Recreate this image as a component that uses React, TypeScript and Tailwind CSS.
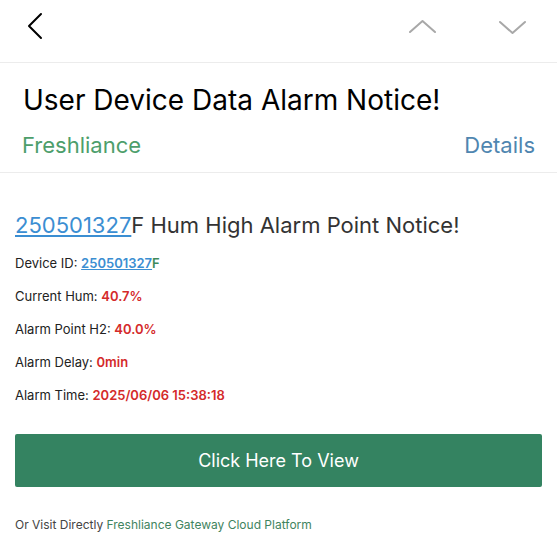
import React from 'react';

// ── Icons ─────────────────────────────────────────────────────────────────────

function Chevron({ d, box, className }: { d: string; box: string; className: string }) {
  return (
    <svg viewBox={box} fill="none" className={className}>
      <path d={d} stroke="currentColor" strokeWidth={2} strokeLinecap="round" strokeLinejoin="round" />
    </svg>
  );
}

// ── Detail rows ───────────────────────────────────────────────────────────────

const ROWS: { label: string; value: string }[] = [
  { label: 'Current Hum:', value: '40.7%' },
  { label: 'Alarm Point H2:', value: '40.0%' },
  { label: 'Alarm Delay:', value: '0min' },
  { label: 'Alarm Time:', value: '2025/06/06 15:38:18' },
];

export default function App() {
  return (
    <div className="w-[557px] h-[543px] bg-white overflow-hidden" style={{ fontFamily: 'Inter, "Noto Sans", sans-serif' }}>
      {/* Top bar */}
      <div className="h-[63px] flex items-center justify-between pl-[27px] pr-[31px] pb-[10px] border-b border-[#ececec]">
        <Chevron box="0 0 16 28" d="M14 2 L2 14 L14 26" className="w-[16px] h-[28px] text-black" />
        <div className="flex items-center gap-[63px]">
          <Chevron box="0 0 27 15" d="M1 13 L13.5 2 L26 13" className="w-[27px] h-[15px] text-[#a8a8a8]" />
          <Chevron box="0 0 27 15" d="M1 2 L13.5 13 L26 2" className="w-[27px] h-[15px] text-[#a8a8a8] mt-[2px]" />
        </div>
      </div>

      {/* Mail header */}
      <div className="h-[110px] border-b border-[#ececec] px-[22px] pt-[19px]">
        <h1 className="text-[28px] leading-[36px] text-black pl-[1px]">User Device Data Alarm Notice!</h1>
        <div className="flex justify-between items-center mt-[13px] text-[22px] leading-[28px]">
          <span className="text-[#4d9e6b]">Freshliance</span>
          <span className="text-[#4f86b0]">Details</span>
        </div>
      </div>

      {/* Body */}
      <div className="px-[15px] pt-[36px]">
        <h2 className="text-[22px] leading-[32px] text-[#333]">
          <span className="text-[#3b8ed2] underline underline-offset-2">250501327</span>F Hum High Alarm Point Notice!
        </h2>
        <div className="mt-[12px] flex flex-col gap-[13px] text-[13px] leading-[20px] text-[#222]">
          <div>
            Device ID:{' '}
            <span className="font-semibold">
              <span className="text-[#3b8ed2] underline">250501327</span>
              <span className="text-[#3f8a5a]">F</span>
            </span>
          </div>
          {ROWS.map(r => (
            <div key={r.label}>
              {r.label} <span className="font-semibold text-[#d42a2a]">{r.value}</span>
            </div>
          ))}
        </div>

        <div className="mt-[29px] h-[53px] rounded-[2px] bg-[#348361] flex items-center justify-center text-white text-[18px]">
          Click Here To View
        </div>

        <p className="mt-[29px] text-[12px] leading-[18px] text-[#444]">
          Or Visit Directly <span className="text-[#3f8460]">Freshliance Gateway Cloud Platform</span>
        </p>
      </div>
    </div>
  );
}
